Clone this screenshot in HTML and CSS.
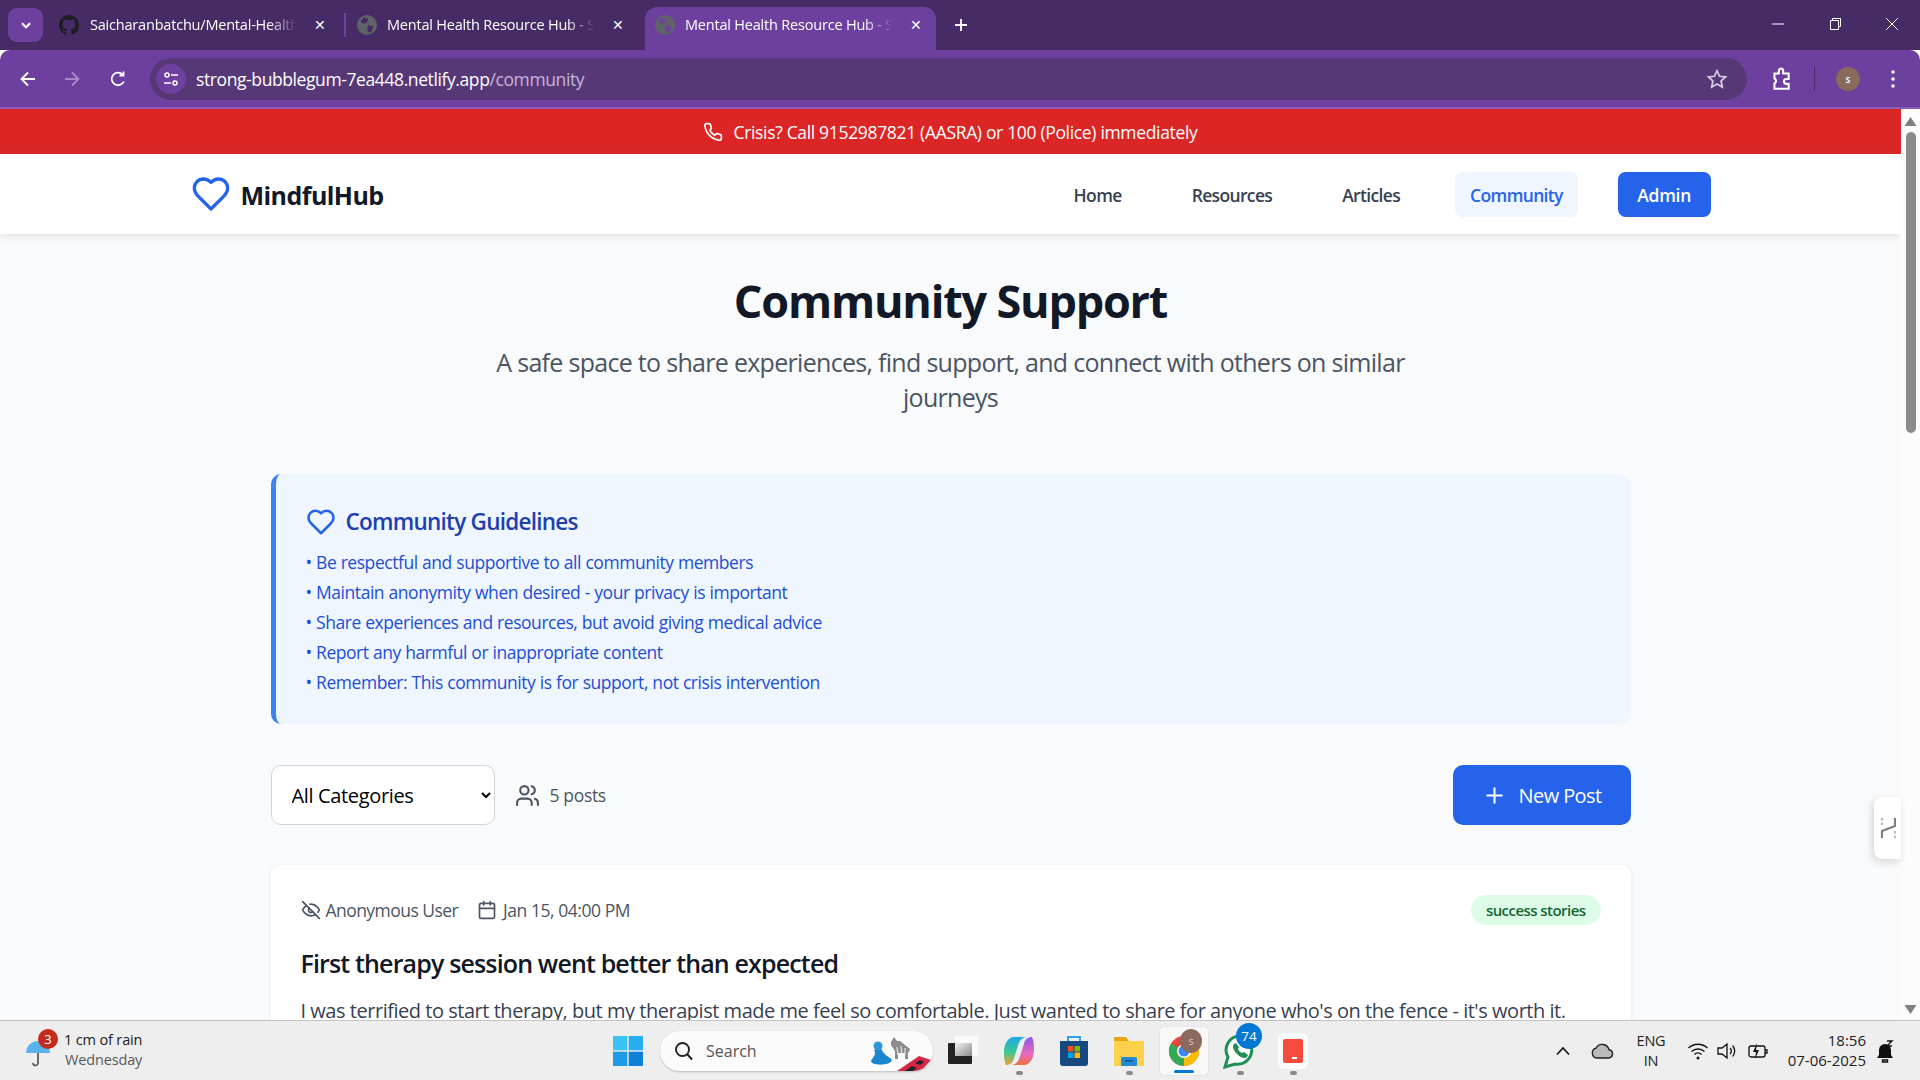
FILE: index.html
```html
<!DOCTYPE html>
<html lang="en">
<head>
<meta charset="utf-8">
<title>Mental Health Resource Hub - Community</title>
<link rel="stylesheet" href="styles.css">
</head>
<body>
<div class="tabstrip">
  <button class="tab-search"><svg viewBox="0 0 12 12" class="i12"><path d="M2.5 4.5 6 8l3.500-3.500" fill="none" stroke="#fff" stroke-width="1.800"/></svg></button>
  <div class="tab tab-one">
    <svg class="fav" viewBox="0 0 16 16"><path fill="#1b1f23" d="M8 0C3.580 0 0 3.580 0 8c0 3.540 2.290 6.530 5.470 7.590.4.070.55-.17.55-.38v-1.490c-2.010.37-2.530-.49-2.690-.94-.09-.23-.48-.94-.82-1.130-.28-.15-.68-.52-.01-.53.63-.01 1.080.58 1.230.82.720 1.210 1.870.870 2.330.660.070-.520.280-.870.510-1.070-1.780-.200-3.640-.890-3.640-3.950 0-.870.310-1.590.820-2.150-.080-.200-.360-1.020.080-2.120 0 0 .670-.210 2.200.820a7.420 7.420 0 0 1 4 0c1.530-1.040 2.200-.820 2.200-.820.440 1.100.160 1.920.080 2.120.510.560.820 1.270.820 2.150 0 3.070-1.870 3.750-3.650 3.950.290.250.540.730.540 1.480v2.190c0 .210.150.460.550.380A8.010 8.010 0 0 0 16 8c0-4.420-3.580-8-8-8z"/></svg>
    <span class="tab-title">Saicharanbatchu/Mental-Health</span>
    <span class="tab-x">✕</span>
  </div>
  <div class="tab-sep"></div>
  <div class="tab tab-two">
    <svg class="fav" viewBox="0 0 16 16"><circle cx="8" cy="8" r="8" fill="#5f6368"/><path fill="#472b66" d="M5 2 9 3 8 6 5 7 3 5zM9 8l4 1-1 4-3 1-1-3z"/></svg>
    <span class="tab-title">Mental Health Resource Hub - S</span>
    <span class="tab-x">✕</span>
  </div>
  <div class="tab tab-active">
    <svg class="fav" viewBox="0 0 16 16"><circle cx="8" cy="8" r="8" fill="#5f6368"/><path fill="#6d40a0" d="M5 2 9 3 8 6 5 7 3 5zM9 8l4 1-1 4-3 1-1-3z"/></svg>
    <span class="tab-title">Mental Health Resource Hub - S</span>
    <span class="tab-x">✕</span>
  </div>
  <svg class="newtab" viewBox="0 0 14 14"><path d="M7 1v12M1 7h12" stroke="#fff" stroke-width="1.800"/></svg>
  <div class="winctl">
    <svg class="wc" viewBox="0 0 14 14"><path d="M1 7h12" stroke="#fff"/></svg>
    <svg class="wc" viewBox="0 0 14 14"><path d="M2.500 3.500h8v9h-8zM4.500 3.500v-2h8v8h-2" fill="none" stroke="#fff"/></svg>
    <svg class="wc" viewBox="0 0 14 14"><path d="M1 1l12 12M13 1 1 13" stroke="#fff"/></svg>
  </div>
</div>

<div class="toolbar">
  <svg class="tb-ic" viewBox="0 0 20 20"><path d="M17 10H4M10 3.500 3.500 10l6.500 6.500" fill="none" stroke="#fff" stroke-width="1.800"/></svg>
  <svg class="tb-ic tb-fwd" viewBox="0 0 20 20"><path d="M3 10h13M10 3.500l6.500 6.500-6.500 6.500" fill="none" stroke="#a58ac4" stroke-width="1.800"/></svg>
  <svg class="tb-ic tb-rel" viewBox="0 0 20 20"><path d="M15.800 12.500A6.300 6.300 0 1 1 14.500 5.500M15.500 2.500v4h-4" fill="none" stroke="#fff" stroke-width="1.800"/></svg>
  <div class="omni">
    <span class="site-ic"><svg class="i18" viewBox="0 0 18 18"><g fill="none" stroke="#fff" stroke-width="1.500"><circle cx="5" cy="5" r="2"/><path d="M9 5h7M2 13h7"/><circle cx="13" cy="13" r="2"/></g></svg></span>
    <span class="url">strong-bubblegum-7ea448.netlify.app<span class="url-path">/community</span></span>
    <svg class="star" viewBox="0 0 20 20"><path d="m10 2.500 2.300 5 5.400.6-4 3.700 1.100 5.400-4.800-2.700-4.800 2.700 1.100-5.400-4-3.700 5.400-.6z" fill="none" stroke="#d6cde2" stroke-width="1.600"/></svg>
  </div>
  <svg class="ext" viewBox="0 0 22 22"><path d="M5 6h4V3.500a2 2 0 0 1 4 0V6h5v5h-2a2.200 2.200 0 0 0 0 4.500h2V20H5v-5a2.500 2.500 0 0 0 0-4.500z" fill="none" stroke="#fff" stroke-width="1.900"/></svg>
  <div class="tb-sep"></div>
  <span class="avatar">s</span>
  <svg class="menu" viewBox="0 0 6 20"><g fill="#fff"><circle cx="3" cy="3" r="1.800"/><circle cx="3" cy="10" r="1.800"/><circle cx="3" cy="17" r="1.800"/></g></svg>
</div>
<div class="chrome-line"></div>

<div class="viewport">
  <div class="page">
    <div class="crisis">
      <svg class="phone" viewBox="0 0 24 24"><path d="M22 16.920v3a2 2 0 0 1-2.180 2 19.790 19.790 0 0 1-8.630-3.070 19.500 19.500 0 0 1-6-6 19.790 19.790 0 0 1-3.070-8.670A2 2 0 0 1 4.110 2h3a2 2 0 0 1 2 1.720 12.840 12.840 0 0 0 .7 2.810 2 2 0 0 1-.45 2.110L8.090 9.910a16 16 0 0 0 6 6l1.270-1.270a2 2 0 0 1 2.110-.45 12.840 12.840 0 0 0 2.810.7A2 2 0 0 1 22 16.920z"/></svg>
      <span>Crisis? Call 9152987821 (AASRA) or 100 (Police) immediately</span>
    </div>
    <header class="nav">
      <div class="nav-in">
        <div class="logo">
          <svg class="logo-heart" viewBox="0 0 24 24"><path d="M19 14c1.490-1.460 3-3.210 3-5.500A5.500 5.500 0 0 0 16.500 3c-1.760 0-3 .5-4.500 2-1.500-1.500-2.740-2-4.500-2A5.500 5.500 0 0 0 2 8.500c0 2.300 1.500 4.050 3 5.500l7 7Z"/></svg>
          <span>MindfulHub</span>
        </div>
        <nav class="links">
          <a class="link">Home</a>
          <a class="link">Resources</a>
          <a class="link">Articles</a>
          <a class="link link-on">Community</a>
          <a class="link link-admin">Admin</a>
        </nav>
      </div>
    </header>
    <main class="main">
      <h1 class="title">Community Support</h1>
      <p class="subtitle">A safe space to share experiences, find support, and connect with others on similar journeys</p>
      <section class="guide">
        <h2 class="guide-h">
          <svg class="guide-heart" viewBox="0 0 24 24"><path d="M19 14c1.490-1.460 3-3.210 3-5.500A5.500 5.500 0 0 0 16.500 3c-1.760 0-3 .5-4.500 2-1.500-1.500-2.740-2-4.500-2A5.500 5.500 0 0 0 2 8.500c0 2.300 1.500 4.050 3 5.500l7 7Z"/></svg>
          Community Guidelines
        </h2>
        <ul class="guide-list">
          <li>• Be respectful and supportive to all community members</li>
          <li>• Maintain anonymity when desired - your privacy is important</li>
          <li>• Share experiences and resources, but avoid giving medical advice</li>
          <li>• Report any harmful or inappropriate content</li>
          <li>• Remember: This community is for support, not crisis intervention</li>
        </ul>
      </section>
      <div class="filters">
        <div class="filters-l">
          <select class="select"><option>All Categories</option></select>
          <div class="count">
            <svg class="users" viewBox="0 0 24 24"><path d="M16 21v-2a4 4 0 0 0-4-4H6a4 4 0 0 0-4 4v2"/><circle cx="9" cy="7" r="4"/><path d="M22 21v-2a4 4 0 0 0-3-3.870"/><path d="M16 3.130a4 4 0 0 1 0 7.750"/></svg>
            <span>5 posts</span>
          </div>
        </div>
        <button class="newpost"><svg class="plus" viewBox="0 0 24 24"><path d="M5 12h14M12 5v14"/></svg>New Post</button>
      </div>
      <article class="post">
        <div class="post-top">
          <div class="meta">
            <span class="meta-i meta-anon"><svg class="m-ic" viewBox="0 0 24 24"><path d="M9.880 9.880a3 3 0 1 0 4.240 4.240"/><path d="M10.730 5.080A10.430 10.430 0 0 1 12 5c7 0 10 7 10 7a13.160 13.160 0 0 1-1.670 2.680"/><path d="M6.610 6.610A13.526 13.526 0 0 0 2 12s3 7 10 7a9.740 9.740 0 0 0 5.390-1.610"/><path d="M2 2l20 20"/></svg>Anonymous User</span>
            <span class="meta-i"><svg class="m-ic" viewBox="0 0 24 24"><rect x="3" y="4" width="18" height="18" rx="2"/><path d="M16 2v4M8 2v4M3 10h18"/></svg>Jan 15, 04:00 PM</span>
          </div>
          <span class="badge">success stories</span>
        </div>
        <h3 class="post-h">First therapy session went better than expected</h3>
        <p class="post-b">I was terrified to start therapy, but my therapist made me feel so comfortable. Just wanted to share for anyone who's on the fence - it's worth it.</p>
      </article>
    </main>
  </div>
  <div class="sidepanel"><svg class="sp-ic" viewBox="0 0 16 22"><path d="M15 1v8L2 14v7" fill="none" stroke="#808080" stroke-width="2.200"/><path d="M2 1v8M15 14v7" fill="none" stroke="#b8b8b8" stroke-width="2.200" stroke-dasharray="2.500 2"/></svg></div>
  <div class="scrollbar">
    <svg class="sb-arrow" viewBox="0 0 12 10"><path d="M6 1 12 10H0z" fill="#808080"/></svg>
    <div class="sb-thumb"></div>
    <svg class="sb-arrow sb-down" viewBox="0 0 12 10"><path d="M6 9 12 0H0z" fill="#808080"/></svg>
  </div>
</div>

<footer class="taskbar">
  <div class="weather">
    <div class="umbrella">
      <svg class="umb-ic" viewBox="0 0 26 30"><path d="M1 16a12 12 0 0 1 24 0z" fill="#5cb2ee"/><path d="M13 16v10a2.500 2.500 0 0 1-5 0" fill="none" stroke="#555" stroke-width="1.700"/></svg>
      <span class="wbadge">3</span>
    </div>
    <div class="wtext"><span>1 cm of rain</span><span class="wday">Wednesday</span></div>
  </div>
  <div class="tb-center">
    <svg class="winlogo" viewBox="0 0 30 30"><rect width="14.300" height="14.300" fill="#3cc3f5"/><rect x="15.700" width="14.300" height="14.300" fill="#28aef0"/><rect y="15.700" width="14.300" height="14.300" fill="#1c9ae8"/><rect x="15.700" y="15.700" width="14.300" height="14.300" fill="#0f80d8"/></svg>
    <div class="search">
      <svg class="s-ic" viewBox="0 0 20 20"><circle cx="8.500" cy="8.500" r="6.500" fill="none" stroke="#222" stroke-width="1.900"/><path d="m13 13 5 5.500" stroke="#222" stroke-width="2"/></svg>
      <span>Search</span>
      <svg class="s-art" viewBox="0 0 62 38"><path d="M5 17C8 21 4 24 2 28c0 5 20 5 21-1-3-4-9-5-11-12z" fill="#1c86d0"/><circle cx="9" cy="13" r="4.500" fill="#2a96de"/><path d="m22 9 3-5 3 4h3l10 8-1 3h-1v7h-3v-6h-7v6h-3v-8l-4-6z" fill="#8c8c8c"/><path d="M28 14l1 8M32 13l1 9M36 15v7" stroke="#e4e4e4" stroke-width="1.200"/><path d="M28 38 50 23l12 4-10 11z" fill="#d62845"/><path d="m36 38 7-5 5 2-4 3zM46 30l5-3 4 2-4 3z" fill="#22222c"/></svg>
    </div>
    <svg class="tk-view" viewBox="0 0 30 30"><defs><linearGradient id="tvg" x1="0" y1="0" x2="1" y2="1"><stop offset="0" stop-color="#f2f2f2"/><stop offset="1" stop-color="#8a8a8a"/></linearGradient></defs><rect x="7" y="0" width="23" height="20" fill="#fafafa"/><rect y="7" width="24" height="21" rx="1" fill="#222"/><rect x="7" y="7" width="17" height="13" fill="url(#tvg)"/></svg>
    <span class="app run app-copilot"><svg class="tk" viewBox="0 0 30 30"><defs><linearGradient id="cpa" x1="0" y1="0" x2="0" y2="1"><stop offset="0" stop-color="#1fa8e8"/><stop offset=".55" stop-color="#3cc98e"/><stop offset="1" stop-color="#f0a030"/></linearGradient><linearGradient id="cpb" x1="0" y1="0" x2="0" y2="1"><stop offset="0" stop-color="#8a5ce8"/><stop offset=".6" stop-color="#e86ac0"/><stop offset="1" stop-color="#f2703f"/></linearGradient></defs><path d="M20 29H8c5-1 7-5 8-9l4-12c1-5 4-7 8-7 2 4 2 9 2 13 0 8-4 15-10 15z" fill="url(#cpb)"/><path d="M10 1h12c-5 1-7 5-8 9l-4 12c-1 5-4 7-8 7-2-4-2-9-2-13C0 8 4 1 10 1z" fill="url(#cpa)"/></svg></span>
    <span class="app app-store"><svg class="tk" viewBox="0 0 30 30"><path d="M9 5V1h12v4" fill="none" stroke="#2aa5e8" stroke-width="2"/><path d="M1 5h28v22a3 3 0 0 1-3 3H4a3 3 0 0 1-3-3z" fill="#17487f"/><rect x="9" y="10" width="5.500" height="5.500" fill="#f25022"/><rect x="15.500" y="10" width="5.500" height="5.500" fill="#7fba00"/><rect x="9" y="16.500" width="5.500" height="5.500" fill="#00a4ef"/><rect x="15.500" y="16.500" width="5.500" height="5.500" fill="#ffb900"/></svg></span>
    <span class="app run app-files"><svg class="tk" viewBox="0 0 30 30"><path d="M0 1h12l3 4h15v3H0z" fill="#e8a317"/><path d="M0 5h30v25H0z" fill="#fcd24d"/><rect x="7" y="21" width="16" height="9" rx="1.500" fill="#1f8ad6"/><rect x="11" y="24" width="8" height="1.500" fill="#0c4f8e"/></svg></span>
    <div class="chrome-tile">
      <svg class="chrome-ic" viewBox="0 0 32 32"><circle cx="16" cy="16" r="15" fill="#e8453c"/><path d="M16 16 3 8.500A15 15 0 0 0 16 31z" fill="#34a853"/><path d="M16 16v15A15 15 0 0 0 29 8.500z" fill="#fbbc05"/><circle cx="16" cy="16" r="7" fill="#fff"/><circle cx="16" cy="16" r="5.500" fill="#4285f4"/></svg>
      <span class="chrome-av">s</span>
      <span class="chrome-run"></span>
    </div>
    <div class="app run wa">
      <svg class="wa-ic" viewBox="0 0 34 36"><path d="M17 3a14 14 0 0 0-12 21l-3 10 10-3A14 14 0 1 0 17 3z" fill="#fff" stroke="#1f8f56" stroke-width="3"/><path d="M11 11c-2 2-1 6 3 10s8 5 10 3l1-2-4-3-2 1c-2-1-3-2-4-4l1-2-3-4z" fill="#1f8f56"/></svg>
      <span class="wa-badge">74</span>
    </div>
    <div class="app run redapp"><span class="red-in"><span class="red-dot"></span></span></div>
  </div>
  <div class="tray">
    <svg class="tr-chev" viewBox="0 0 16 10"><path d="M2 8.500 8 2l6 6.500" fill="none" stroke="#111" stroke-width="1.600"/></svg>
    <svg class="tr-cloud" viewBox="0 0 24 18"><path d="M6 16a5 5 0 0 1-1-9.800 7 7 0 0 1 13 1.500A4.200 4.200 0 0 1 18 16z" fill="#bbb" stroke="#222" stroke-width="1.400"/></svg>
    <div class="lang"><span>ENG</span><span>IN</span></div>
    <svg class="tr-ic tr-wifi" viewBox="0 0 22 20"><g fill="none" stroke="#111" stroke-width="1.400"><path d="M1.500 7a14 14 0 0 1 19 0M4.500 10.500a9.500 9.500 0 0 1 13 0M7.500 13.500a5 5 0 0 1 7 0"/></g><circle cx="11" cy="17" r="1.500" fill="#111"/></svg>
    <svg class="tr-ic tr-vol" viewBox="0 0 22 20"><g fill="none" stroke="#111" stroke-width="1.300"><path d="M2 7h4l5-4v14l-5-4H2zM14 7a4 4 0 0 1 0 6M16.500 4.500a8 8 0 0 1 0 11"/></g></svg>
    <svg class="tr-ic tr-bat" viewBox="0 0 22 20"><g fill="none" stroke="#111" stroke-width="1.300"><rect x="2" y="5" width="16" height="11" rx="2"/><path d="M18 9h2v3h-2"/></g><path d="M10 2 6 11h3l-1 7 4-9H9z" fill="#111"/></svg>
    <div class="clock"><span>18:56</span><span>07-06-2025</span></div>
    <svg class="tr-bell" viewBox="0 0 20 24"><path d="M10 5a6 6 0 0 0-6 6v5l-2 3h16l-2-3v-5a6 6 0 0 0-6-6z" fill="#111"/><path d="M7.500 21h5v2h-5zM12 2h5l-5 5h5" stroke="#111" fill="none" stroke-width="1.400"/></svg>
  </div>
</footer>
</body>
</html>
```
FILE: styles.css
```css
* { box-sizing: border-box; margin: 0; padding: 0; }
html, body { height: 100%; overflow: hidden; }
body { display: flex; flex-direction: column; height: 1080px; font-family: "Open Sans", "Noto Sans", sans-serif; background: #f9fafb; }

/* tab strip */
.tabstrip { flex: none; height: 50px; background: #472b66; display: flex; align-items: flex-end; position: relative; padding-left: 8px; color: #fff; }
.tab-search { width: 35px; height: 34px; margin-bottom: 8px; border: 0; border-radius: 9px; background: #6d40a0; display: flex; align-items: center; justify-content: center; }
.i12 { width: 14px; height: 14px; }
.tab { height: 43px; padding-bottom: 8px; display: flex; align-items: center; font-size: 14.500px; letter-spacing: -.2px; }
.tab-one { width: 301px; padding-left: 16px; }
.tab-two { width: 286px; padding-left: 11px; }
.tab-active { width: 291px; margin-left: 13px; padding-left: 10px; background: #6d40a0; border-radius: 12px 12px 0 0; }
.fav { flex: none; width: 20px; height: 20px; margin-right: 10px; }
.tab-one .fav { margin-right: 11px; }
.tab-title { flex: none; width: 214px; overflow: hidden; white-space: nowrap; -webkit-mask-image: linear-gradient(to right, #000 84%, transparent 97%); mask-image: linear-gradient(to right, #000 84%, transparent 97%); }
.tab-one .tab-title { width: 213px; }
.tab-x { flex: none; width: 16px; margin-left: 9px; font-size: 14px; text-align: center; }
.tab-sep { width: 2px; height: 24px; margin-bottom: 13px; background: #6d40a0; }
.newtab { width: 14px; height: 14px; margin: 0 0 18px 18px; }
.winctl { position: absolute; right: 21px; top: 17px; display: flex; gap: 43px; }
.wc { width: 14px; height: 14px; }

/* toolbar */
.toolbar { flex: none; height: 57px; background: #6d40a0; border-radius: 10px 10px 0 0; display: flex; align-items: center; padding-left: 18px; }
.tb-ic { width: 20px; height: 20px; }
.tb-fwd { margin-left: 24px; }
.tb-rel { margin-left: 26px; }
.omni { width: 1597px; height: 42px; margin-left: 22px; border-radius: 21px; background: #563877; display: flex; align-items: center; padding-left: 6px; }
.site-ic { width: 30px; height: 30px; border-radius: 50%; background: #6d40a0; display: flex; align-items: center; justify-content: center; flex: none; }
.i18 { width: 18px; height: 18px; }
.url { margin-left: 10px; color: #fff; font-size: 17.500px; letter-spacing: -.4px; }
.url-path { color: #c5b6d8; }
.star { width: 22px; height: 22px; margin-left: auto; margin-right: 19px; }
.ext { width: 24px; height: 24px; margin-left: 22px; }
.tb-sep { width: 1px; height: 24px; margin-left: 21px; background: #472b66; }
.avatar { width: 24px; height: 24px; margin-left: 21px; border-radius: 50%; background: #8a6a5c; color: #fff; font-size: 10px; font-weight: 600; display: flex; align-items: center; justify-content: center; }
.menu { width: 6px; height: 20px; margin-left: 30px; }
.chrome-line { flex: none; height: 2px; background: #8f5cb5; }

/* page viewport */
.viewport { flex: none; height: 911px; display: flex; position: relative; overflow: hidden; }
.page { width: 1901px; flex: none; overflow: hidden; background: #f9fafb; }
.crisis { height: 45px; background: #dc2626; color: #fff; display: flex; align-items: center; justify-content: center; gap: 10px; font-size: 17.500px; letter-spacing: -.33px; }
.phone { width: 20px; height: 20px; fill: none; stroke: #fff; stroke-width: 2; stroke-linecap: round; stroke-linejoin: round; }
.nav { height: 80px; background: #fff; box-shadow: 0 2px 8px rgba(0,0,0,.1); position: relative; }
.nav-in { max-width: 1600px; margin: 0 auto; padding: 2px 40px 0; height: 100%; display: flex; align-items: center; justify-content: space-between; }
.logo { display: flex; align-items: center; gap: 10px; font-size: 25px; font-weight: 700; color: #111827; letter-spacing: -.55px; }
.logo-heart { width: 40px; height: 40px; margin-top: -2px; fill: none; stroke: #2563eb; stroke-width: 2; stroke-linecap: round; stroke-linejoin: round; }
.links { display: flex; gap: 40px; margin-top: -2px; }
.link { height: 45px; padding: 2px 15px 0; border-radius: 7.500px; display: flex; align-items: center; font-size: 17.500px; font-weight: 600; color: #374151; letter-spacing: -.65px; }
.link-on { background: #eff6ff; color: #2563eb; }
.link-admin { background: #2563eb; color: #fff; padding: 2px 19.500px 0; letter-spacing: -.3px; }

.main { max-width: 1440px; margin: 0 auto; padding: 42px 40px 0; }
.title { font-size: 45px; line-height: 50px; font-weight: 700; color: #111827; text-align: center; margin-bottom: 19px; letter-spacing: -1.2px; }
.subtitle { max-width: 960px; margin: 0 auto 59px; text-align: center; font-size: 25px; line-height: 35px; color: #4b5563; letter-spacing: -.7px; }
.guide { background: #eff6ff; border-left: 5px solid #3b82f6; border-radius: 10px; padding: 30px 30px 29px; }
.guide-h { display: flex; align-items: center; gap: 10px; font-size: 22.500px; line-height: 35px; font-weight: 600; color: #1e40af; margin-bottom: 11px; letter-spacing: -.75px; }
.guide-heart { width: 30px; height: 30px; fill: none; stroke: #2563eb; stroke-width: 2; stroke-linecap: round; stroke-linejoin: round; }
.guide-list { list-style: none; display: flex; flex-direction: column; gap: 5px; font-size: 17.500px; line-height: 25px; color: #1d4ed8; letter-spacing: -.45px; word-spacing: .3px; }
.filters { margin-top: 41px; display: flex; align-items: center; justify-content: space-between; }
.filters-l { display: flex; align-items: center; gap: 20px; }
.select { width: 224px; height: 60px; padding-left: 16px; border: 1px solid #d1d5db; border-radius: 10px; background: #fff; font-family: inherit; font-size: 20px; color: #000; letter-spacing: -.35px; }
.count { display: flex; align-items: center; gap: 10px; font-size: 17.500px; color: #4b5563; letter-spacing: -.35px; }
.users { width: 25px; height: 25px; fill: none; stroke: #4b5563; stroke-width: 2; stroke-linecap: round; stroke-linejoin: round; }
.newpost { width: 178px; height: 60px; border: 0; border-radius: 10px; background: #2563eb; color: #fff; font-family: inherit; font-size: 20px; letter-spacing: -.6px; display: flex; align-items: center; justify-content: center; gap: 12px; }
.plus { width: 25px; height: 25px; fill: none; stroke: #fff; stroke-width: 2; stroke-linecap: round; }
.post { margin-top: 40px; background: #fff; border-radius: 10px; padding: 30px; box-shadow: 0 1px 4px rgba(0,0,0,.08); }
.post-top { display: flex; align-items: center; justify-content: space-between; height: 30px; }
.meta { display: flex; gap: 19px; font-size: 17.500px; color: #4b5563; letter-spacing: -.45px; }
.meta-i { display: flex; align-items: center; gap: 6px; }
.meta-anon { gap: 5px; letter-spacing: -.55px; }
.m-ic { width: 20px; height: 20px; fill: none; stroke: #4b5563; stroke-width: 2; stroke-linecap: round; stroke-linejoin: round; }
.badge { height: 30px; padding: 0 15px; border-radius: 15px; background: #dcfce7; color: #166534; font-size: 15px; font-weight: 600; display: flex; align-items: center; letter-spacing: -.55px; }
.post-h { margin-top: 21px; font-size: 25px; line-height: 35px; font-weight: 600; color: #111827; letter-spacing: -.85px; }
.post-b { margin-top: 14px; font-size: 20px; line-height: 32.500px; color: #374151; letter-spacing: -.47px; }

/* overlay panel + scrollbar */
.sidepanel { position: absolute; left: 1874px; top: 688px; width: 27px; height: 62px; background: #fff; border-radius: 8px 0 0 8px; box-shadow: -2px 3px 8px rgba(0,0,0,.15); display: flex; align-items: center; justify-content: center; }
.sp-ic { width: 16px; height: 22px; }
.scrollbar { flex: 1; background: #fcfcfc; display: flex; flex-direction: column; align-items: center; padding-top: 7px; }
.sb-arrow { width: 13px; height: 10px; flex: none; }
.sb-thumb { width: 10px; height: 301px; margin-top: 6px; border-radius: 5px; background: #8a8a8a; }
.sb-down { margin-top: auto; margin-bottom: 5px; }

/* taskbar */
.taskbar { flex: none; height: 60px; background: #eeeeee; border-top: 1px solid #c4c4c4; display: flex; align-items: center; font-size: 14.500px; color: #222; position: relative; }
.weather { width: 613px; flex: none; display: flex; align-items: center; padding-left: 24px; }
.umbrella { width: 40px; height: 40px; position: relative; }
.umb-ic { position: absolute; left: 1px; top: 6px; width: 26px; height: 30px; }
.wbadge { position: absolute; left: 14px; top: -2px; width: 20px; height: 20px; border-radius: 50%; background: #c42b1c; color: #fff; font-size: 13px; display: flex; align-items: center; justify-content: center; }
.wtext { display: flex; flex-direction: column; line-height: 20px; letter-spacing: -.15px; padding-bottom: 2px; }
.wday { color: #5a5a5a; padding-left: 1px; }
.tb-center { display: flex; align-items: center; flex: none; width: 700px; }
.winlogo { width: 30px; height: 30px; flex: none; }
.search { width: 273px; height: 40px; margin-left: 17px; border-radius: 20px; background: #fbfbfb; box-shadow: 0 1px 2px rgba(0,0,0,.2); display: flex; align-items: center; padding-left: 14px; color: #555; font-size: 16px; position: relative; overflow: hidden; }
.s-ic { width: 20px; height: 20px; margin-right: 12px; }
.s-art { position: absolute; right: 2px; bottom: 0; width: 62px; height: 38px; }
.tk-view { width: 30px; height: 30px; flex: none; margin-left: 15px; margin-right: 26px; }
.app { position: relative; flex: none; width: 30px; height: 36px; display: flex; align-items: center; justify-content: center; }
.run::after { content: ""; position: absolute; left: 50%; bottom: -6px; width: 7px; height: 4px; margin-left: -3.500px; border-radius: 2px; background: #8a8a8a; }
.tk { width: 30px; height: 30px; }
.app-copilot, .app-store { margin-right: 25px; }
.app-files { margin-right: 16px; }
.chrome-tile { width: 48px; height: 48px; border-radius: 4px; background: #f8f8f8; display: flex; align-items: center; justify-content: center; position: relative; box-shadow: 0 0 1px rgba(0,0,0,.3); }
.chrome-ic { width: 32px; height: 32px; }
.chrome-av { position: absolute; right: 6px; top: 2px; width: 22px; height: 24px; border-radius: 50%; background: #8a6a5c; color: #d9c8bf; font-size: 11px; display: flex; align-items: center; justify-content: center; }
.chrome-run { position: absolute; left: 14px; bottom: 2px; width: 20px; height: 3px; border-radius: 2px; background: #0078d4; }
.wa { width: 36px; margin-left: 14px; }
.wa-ic { width: 36px; height: 36px; }
.wa-badge { position: absolute; left: 14px; top: -10px; width: 26px; height: 26px; border-radius: 50%; background: #0078d4; color: #fff; font-size: 13.500px; display: flex; align-items: center; justify-content: center; }
.redapp { margin-left: 20px; border-radius: 6px; background: #fbfbfb; }
.red-in { width: 20px; height: 24px; border-radius: 2px; background: #f44c3c; position: relative; }
.red-dot { position: absolute; right: 6px; bottom: 4px; width: 5px; height: 2px; background: #fff; }
.tray { margin-left: auto; display: flex; align-items: center; padding-right: 25px; }
.tr-chev { width: 16px; height: 10px; }
.tr-cloud { width: 24px; height: 18px; margin-left: 20px; }
.lang { width: 50px; margin-left: 11px; display: flex; flex-direction: column; align-items: center; line-height: 20px; letter-spacing: -.2px; }
.tr-ic { width: 22px; height: 20px; }
.tr-wifi { margin-left: 11px; }
.tr-vol { margin-left: 7px; }
.tr-bat { margin-left: 9px; }
.clock { margin-left: 19px; width: 78px; display: flex; flex-direction: column; align-items: flex-end; font-size: 15px; line-height: 20px; padding-bottom: 2px; white-space: nowrap; }
.tr-bell { width: 20px; height: 24px; margin-left: 9px; }
```
